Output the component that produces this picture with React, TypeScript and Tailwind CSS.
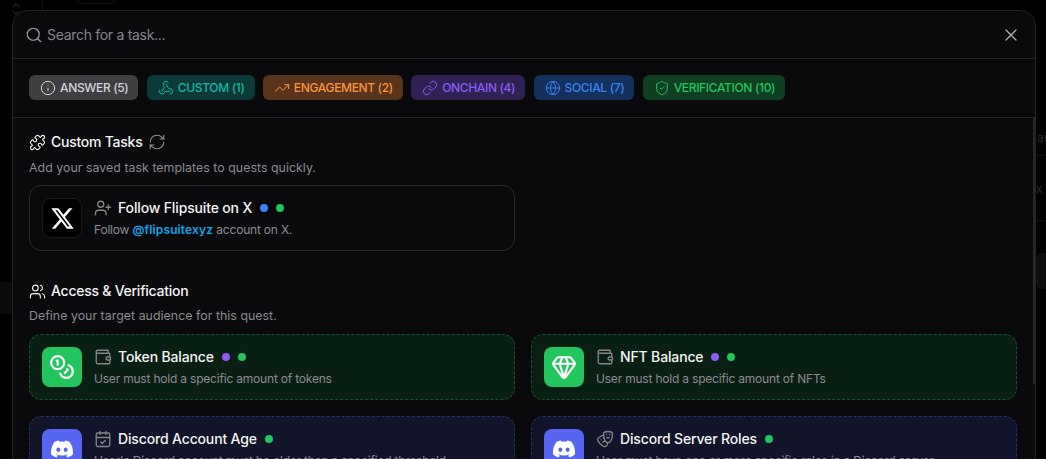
import { Search, X, Info, Webhook, TrendingUp, Link, Globe, ShieldCheck, Puzzle, RefreshCw, UserPlus, Users, Wallet, CalendarCheck, Drama, Gem, Coins, ChevronsUpDown } from "lucide-react";
import { FaDiscord, FaXTwitter } from "react-icons/fa6";
import type { ReactNode } from "react";

const tabs = [
  { label: "ANSWER (5)", Icon: Info, cls: "bg-[#3f3f42] text-[#d4d4d8]" },
  { label: "CUSTOM (1)", Icon: Webhook, cls: "bg-[#0b3a38] text-[#14b8a6]" },
  { label: "ENGAGEMENT (2)", Icon: TrendingUp, cls: "bg-[#58351a] text-[#fb923c]" },
  { label: "ONCHAIN (4)", Icon: Link, cls: "bg-[#2f2154] text-[#8b5cf6]" },
  { label: "SOCIAL (7)", Icon: Globe, cls: "bg-[#14305c] text-[#3b82f6]" },
  { label: "VERIFICATION (10)", Icon: ShieldCheck, cls: "bg-[#0d3f20] text-[#22c55e]" },
];

function Dot({ c }: { c: string }) {
  return <span className={`w-2 h-2 rounded-full ${c}`} />;
}

function Card({ tone, logo, small, title, dots, desc }: { tone: string; logo: ReactNode; small: ReactNode; title: string; dots: string[]; desc: ReactNode }) {
  return (
    <div className={`h-[66px] rounded-xl border px-3 flex items-start pt-3 gap-3 ${tone}`}>
      {logo}
      <div className="flex flex-col min-w-0">
        <div className="flex items-center h-5">
          <span className="text-[#85858a] w-[18px] h-[18px] mr-1.5 flex items-center">{small}</span>
          <span className="text-sm font-medium text-[#f4f4f5] tracking-[-0.15px]">{title}</span>
          <span className="flex items-center gap-2 ml-2">
            {dots.map((d) => (
              <Dot key={d} c={d} />
            ))}
          </span>
        </div>
        <p className="text-xs text-[#8a8a90] mt-[4px] whitespace-nowrap leading-4 tracking-[-0.2px]">{desc}</p>
      </div>
    </div>
  );
}

const green = "border-dashed border-[#14532d] bg-[#0a1f14]";
const navy = "border-dashed border-[#25306b] bg-[#12152a]";
const logoGreen = "w-10 h-10 shrink-0 rounded-lg bg-[#22c55e] text-white flex items-center justify-center";
const logoDiscord = "w-10 h-10 shrink-0 rounded-lg bg-[#5865f2] text-white flex items-center justify-center";
const small = "w-[18px] h-[18px]";

export default function App() {
  return (
    <div className="relative h-[459px] overflow-hidden bg-black font-['Inter',sans-serif]">
      <ChevronsUpDown className="absolute left-[8px] top-[1px] w-4 h-4 text-[#3a3a3d]" strokeWidth={1.5} />
      <div className="absolute left-[42px] top-0 w-px h-[10px] bg-[#141416]" />
      <div className="absolute left-[76px] top-[-20px] w-[41px] h-[24px] rounded-md border border-[#161618]" />
      <div className="absolute left-0 top-[282px] w-3 h-[32px] bg-[#0b0b0c]" />
      <div className="absolute right-0 top-[253px] w-[10px] h-[36px] rounded-l-md bg-[#0d0d0e]" />
      <div className="absolute left-[1036px] top-[155px] w-[10px] h-px bg-[#121214]" />
      <div className="absolute left-[1036px] top-[220px] w-[10px] h-px bg-[#121214]" />
      <div className="absolute left-[1037px] top-[130px] text-xs text-[#2a2a2c]">are</div>
      <div className="absolute left-[1036px] top-[181px] text-xs text-[#2a2a2c]">x</div>
      <div className="relative ml-3 mt-2.5 w-[1024px] h-[480px] rounded-t-2xl border border-[#232326] bg-[#0a0a0c] overflow-hidden">
        <div className="h-12 flex items-center pl-3 pr-[14px] border-b border-[#232326]">
          <Search className="w-[18px] h-[18px] text-[#a1a1aa] mr-1" strokeWidth={1.5} />
          <span className="flex-1 text-sm text-[#85858b] tracking-[-0.3px]">Search for a task...</span>
          <X className="w-5 h-5 text-[#b4b4b8]" strokeWidth={1.5} />
        </div>
        <div className="h-[59px] flex items-start pt-4 gap-[8.3px] px-4 border-b border-[#232326]">
          {tabs.map(({ label, Icon, cls }) => (
            <div key={label} className={`h-[25px] rounded-md pl-[11px] pr-[10px] flex items-center gap-1 text-xs font-medium tracking-[-0.34px] whitespace-nowrap ${cls}`}>
              <Icon className="w-4 h-4" strokeWidth={1.5} />
              {label}
            </div>
          ))}
        </div>
        <div className="pl-4 pr-[18px] pt-4 relative">
          <div className="flex items-center gap-[5px] h-4 text-[#f4f4f5]">
            <Puzzle className="w-[17px] h-[17px]" strokeWidth={1.6} />
            <span className="text-sm font-medium tracking-[-0.25px]">Custom Tasks</span>
            <RefreshCw className="w-[18px] h-[18px] ml-px text-[#8f8f94]" strokeWidth={1.5} />
          </div>
          <p className="text-[12.35px] text-[#8a8a90] mt-[10px] leading-4 tracking-[0.04px]">Add your saved task templates to quests quickly.</p>
          <div className="grid grid-cols-2 gap-4 mt-[9px]">
            <Card
              tone="border-[#2a2a2e] bg-[#0a0a0c]"
              logo={
                <div className="w-10 h-10 shrink-0 rounded-lg bg-black border border-[#1c1c1f] text-white flex items-center justify-center">
                  <FaXTwitter className="w-[25px] h-[25px]" />
                </div>
              }
              small={<UserPlus className={small} strokeWidth={1.75} />}
              title="Follow Flipsuite on X"
              dots={["bg-[#3b82f6]", "bg-[#22c55e]"]}
              desc={
                <>
                  Follow <span className="font-semibold text-[#0ea5e9] tracking-[0.12px]">@flipsuitexyz</span> account on X.
                </>
              }
            />
          </div>
          <div className="flex items-center gap-[5px] h-4 text-[#f4f4f5] mt-8">
            <Users className="w-[17px] h-[17px]" strokeWidth={1.6} />
            <span className="text-sm font-medium tracking-[-0.25px]">Access &amp; Verification</span>
          </div>
          <p className="text-[12.35px] text-[#8a8a90] mt-[9px] leading-4 tracking-[0.04px]">Define your target audience for this quest.</p>
          <div className="grid grid-cols-2 gap-4 mt-[10px]">
            <Card tone={green} logo={<div className={logoGreen}><Coins className="w-[26px] h-[26px]" strokeWidth={2} /></div>} small={<Wallet className={small} strokeWidth={1.75} />} title="Token Balance" dots={["bg-[#8b5cf6]", "bg-[#22c55e]"]} desc="User must hold a specific amount of tokens" />
            <Card tone={green} logo={<div className={logoGreen}><Gem className="w-[26px] h-[26px]" strokeWidth={2} /></div>} small={<Wallet className={small} strokeWidth={1.75} />} title="NFT Balance" dots={["bg-[#8b5cf6]", "bg-[#22c55e]"]} desc="User must hold a specific amount of NFTs" />
            <Card tone={navy} logo={<div className={logoDiscord}><FaDiscord className="w-6 h-6" /></div>} small={<CalendarCheck className={small} strokeWidth={1.75} />} title="Discord Account Age" dots={["bg-[#22c55e]"]} desc="User's Discord account must be older than a specified threshold" />
            <Card tone={navy} logo={<div className={logoDiscord}><FaDiscord className="w-6 h-6" /></div>} small={<Drama className={small} strokeWidth={1.75} />} title="Discord Server Roles" dots={["bg-[#22c55e]"]} desc="User must have one or more specific roles in a Discord server" />
          </div>
        </div>
        <div className="absolute right-0 top-[107px] w-[2px] h-[266px] bg-[#27272a]" />
      </div>
    </div>
  );
}
